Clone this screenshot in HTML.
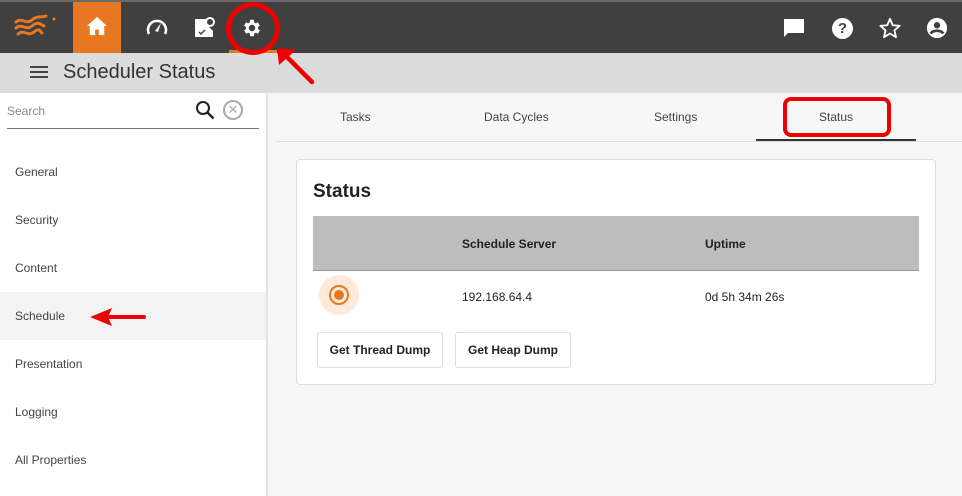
<!DOCTYPE html>
<html><head><meta charset="utf-8"><style>
*{box-sizing:border-box;margin:0;padding:0}
body{width:962px;height:496px;overflow:hidden;font-family:"Liberation Sans",sans-serif;background:#f7f7f7;position:relative;color:#333}
.abs{position:absolute}
#top{left:0;top:0;width:962px;height:53px;background:#404040;border-top:2px solid #6a6a6a}
#hdr{left:0;top:53px;width:962px;height:40px;background:#dcdcdc}
#side{left:0;top:93px;width:268px;height:403px;background:#fff;border-right:2px solid #e4e4e4}
.item{position:absolute;left:15px;font-size:12px;color:#444}
.tab{position:absolute;top:110px;font-size:12px;color:#444}
#card{left:296px;top:159px;width:640px;height:226px;background:#fff;border:1px solid #ddd;border-radius:4px}
.btn{position:absolute;background:#fff;border:1px solid #ddd;border-radius:3px;font-size:12px;font-weight:bold;color:#222;text-align:center;line-height:34px}
</style></head><body>
<div id="top" class="abs"></div>
<div id="hdr" class="abs"></div>
<svg class="abs" style="left:14px;top:14px" width="44" height="24" viewBox="0 0 44 24"><g fill="none" stroke="#e87722" stroke-width="3" stroke-linecap="round"><path d="M2 8c6-5 10 3 16-2s8-2 14-4"/><path d="M2 14c6-5 10 3 16-2s8-2 12 0"/><path d="M4 20c6-5 10 3 16-2s6 0 8 1"/></g><circle cx="40" cy="5" r="1.5" fill="#e87722"/></svg>
<div class="abs" style="left:73px;top:2px;width:48px;height:51px;background:#e87722"></div>
<svg class="abs" style="left:86px;top:16px" width="22" height="20" viewBox="0 0 24 22"><path d="M12 1L1 11h3v10h6v-6h4v6h6V11h3z" fill="#fff"/></svg>
<svg class="abs" style="left:145px;top:17px" width="24" height="20" viewBox="0 0 24 20"><path d="M4 17A9 9 0 1 1 20 17" fill="none" stroke="#fff" stroke-width="2.5"/><path d="M10 14l6-8-3 9z" fill="#fff"/></svg>
<svg class="abs" style="left:193px;top:15px" width="24" height="24" viewBox="0 0 24 24"><path d="M2 4h12v6l6 6v6H2z" fill="#fff"/><circle cx="17" cy="7" r="4" fill="none" stroke="#fff" stroke-width="2"/><path d="M6 17l2 2 4-4" stroke="#404040" stroke-width="1.5" fill="none"/></svg>
<svg class="abs" style="left:241px;top:17px" width="22" height="22" viewBox="0 0 24 24"><path fill="#fff" d="M19.4 13a7.5 7.5 0 0 0 0-2l2.1-1.6-2-3.5-2.5 1a7 7 0 0 0-1.7-1L15 3h-4l-.4 2.9a7 7 0 0 0-1.7 1l-2.5-1-2 3.5L6.6 11a7.5 7.5 0 0 0 0 2l-2.1 1.6 2 3.5 2.5-1a7 7 0 0 0 1.7 1L11 21h4l.4-2.9a7 7 0 0 0 1.7-1l2.5 1 2-3.5zM13 15.5a3.5 3.5 0 1 1 0-7 3.5 3.5 0 0 1 0 7z" transform="translate(-1 0)"/></svg>
<div class="abs" style="left:229px;top:50px;width:48px;height:3px;background:#e87722"></div>
<div class="abs" style="left:226px;top:2px;width:54px;height:53px;border:5px solid #e00;border-radius:50%"></div>
<svg class="abs" style="left:272px;top:44px" width="46" height="44" viewBox="0 0 46 44"><path d="M10 8l30 30" stroke="#e00" stroke-width="4.5" stroke-linecap="round"/><path d="M5 4l19 2-17 15z" fill="#e00"/></svg>
<svg class="abs" style="left:783px;top:18px" width="22" height="20" viewBox="0 0 22 20"><path d="M1 1h20v14H5l-4 4z" fill="#fff"/></svg>
<div class="abs" style="left:832px;top:18px;width:21px;height:21px;border-radius:50%;background:#fff;color:#404040;font-weight:bold;font-size:15px;text-align:center;line-height:21px">?</div>
<svg class="abs" style="left:879px;top:17px" width="22" height="22" viewBox="0 0 24 24"><path d="M12 2l3 7 7.5.6-5.7 5 1.8 7.4L12 18l-6.6 4 1.8-7.4-5.7-5L9 9z" fill="none" stroke="#fff" stroke-width="2" stroke-linejoin="round"/></svg>
<svg class="abs" style="left:926px;top:17px" width="22" height="22" viewBox="0 0 24 24"><circle cx="12" cy="12" r="11" fill="#fff"/><circle cx="12" cy="9" r="3.5" fill="#404040"/><path d="M5 18c3-4 11-4 14 0" stroke="#404040" stroke-width="3" fill="none"/></svg>
<div class="abs" style="left:30px;top:66px;width:18px;height:2px;background:#444;box-shadow:0 5px 0 #444,0 10px 0 #444"></div>
<div class="abs" style="left:63px;top:61px;font-size:20px;color:#333">Scheduler Status</div>
<div id="side" class="abs"></div>
<div class="abs" style="left:7px;top:104px;font-size:12px;color:#888">Search</div>
<svg class="abs" style="left:195px;top:100px" width="20" height="20" viewBox="0 0 20 20"><circle cx="8" cy="8" r="6" fill="none" stroke="#222" stroke-width="2"/><path d="M12.5 12.5l6 6" stroke="#222" stroke-width="2.5"/></svg>
<div class="abs" style="left:223px;top:100px;width:20px;height:20px;border:2px solid #aaa;border-radius:50%;color:#aaa;font-size:13px;text-align:center;line-height:16px">✕</div>
<div class="abs" style="left:7px;top:128px;width:252px;height:1px;background:#777"></div>
<div class="abs" style="left:0;top:292px;width:266px;height:48px;background:#f3f3f3"></div>
<div class="item" style="top:165px">General</div>
<div class="item" style="top:213px">Security</div>
<div class="item" style="top:261px">Content</div>
<div class="item" style="top:309px">Schedule</div>
<div class="item" style="top:357px">Presentation</div>
<div class="item" style="top:405px">Logging</div>
<div class="item" style="top:453px">All Properties</div>
<svg class="abs" style="left:88px;top:305px" width="60" height="24" viewBox="0 0 60 24"><path d="M20 12h36" stroke="#e00" stroke-width="4" stroke-linecap="round"/><path d="M2 12l22-9-4 9 4 9z" fill="#e00"/></svg>
<div class="abs" style="left:276px;top:141px;width:686px;height:1px;background:#ddd"></div>
<div class="tab" style="left:340px">Tasks</div>
<div class="tab" style="left:484px">Data Cycles</div>
<div class="tab" style="left:654px">Settings</div>
<div class="tab" style="left:819px">Status</div>
<div class="abs" style="left:756px;top:139px;width:160px;height:2px;background:#333"></div>
<div class="abs" style="left:783px;top:97px;width:108px;height:40px;border:4px solid #e00;border-radius:8px"></div>
<div id="card" class="abs"></div>
<div class="abs" style="left:313px;top:181px;font-size:19px;font-weight:bold;color:#222">Status</div>
<div class="abs" style="left:313px;top:216px;width:606px;height:55px;background:#bdbdbd;border-bottom:1px solid #999"></div>
<div class="abs" style="left:462px;top:237px;font-size:12px;font-weight:bold;color:#222">Schedule Server</div>
<div class="abs" style="left:705px;top:237px;font-size:12px;font-weight:bold;color:#222">Uptime</div>
<div class="abs" style="left:319px;top:275px;width:40px;height:40px;border-radius:50%;background:#fdeadb"></div>
<div class="abs" style="left:329px;top:285px;width:20px;height:20px;border-radius:50%;border:2px solid #e87722"></div>
<div class="abs" style="left:334px;top:290px;width:10px;height:10px;border-radius:50%;background:#e87722"></div>
<div class="abs" style="left:462px;top:290px;font-size:12px;color:#222">192.168.64.4</div>
<div class="abs" style="left:705px;top:290px;font-size:12px;color:#222">0d 5h 34m 26s</div>
<div class="btn" style="left:317px;top:332px;width:126px;height:36px">Get Thread Dump</div>
<div class="btn" style="left:455px;top:332px;width:116px;height:36px">Get Heap Dump</div>
</body></html>
